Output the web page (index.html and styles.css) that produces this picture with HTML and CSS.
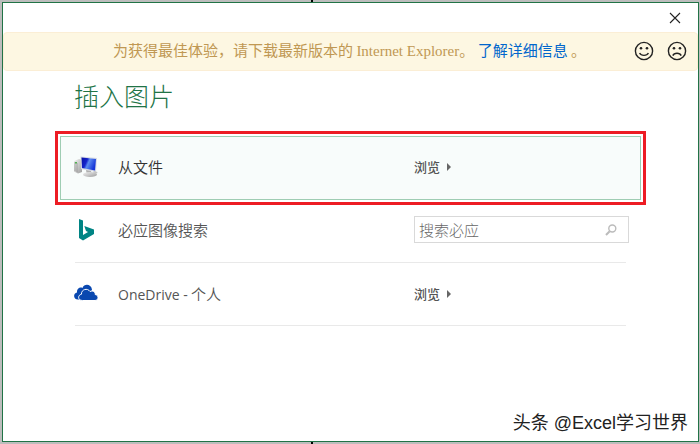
FILE: index.html
```html
<!DOCTYPE html>
<html lang="zh-CN">
<head>
<meta charset="utf-8">
<title>插入图片</title>
<link rel="stylesheet" href="styles.css">
</head>
<body>
<main class="dialog">
  <header class="titlebar">
    <button class="icon-button" type="button" aria-label="关闭">
      <svg width="12" height="12" viewBox="0 0 12 12"><path d="M1 1l10 10M11 1L1 11" fill="none" stroke="#222" stroke-width="1.1"/></svg>
    </button>
  </header>
  <div class="notice">
    <p class="notice-text">为获得最佳体验，请下载最新版本的 <span class="latin">Internet Explorer</span>。 <a href="#more">了解详细信息</a> 。</p>
    <div class="feedback">
      <button class="icon-button" type="button" aria-label="满意">
        <svg width="20" height="20" viewBox="0 0 20 20"><g fill="none" stroke="#222" stroke-width="1.4"><circle cx="10" cy="10" r="8.6"/><path d="M5.6 12c1.6 3.2 7.2 3.2 8.8 0"/></g><circle cx="7" cy="7.3" r="1.3" fill="#222"/><circle cx="13" cy="7.3" r="1.3" fill="#222"/></svg>
      </button>
      <button class="icon-button" type="button" aria-label="不满意">
        <svg width="20" height="20" viewBox="0 0 20 20"><g fill="none" stroke="#222" stroke-width="1.4"><circle cx="10" cy="10" r="8.6"/><path d="M5.8 14.6c1.4-3.2 7-3.2 8.4 0"/></g><circle cx="7" cy="7.3" r="1.3" fill="#222"/><circle cx="13" cy="7.3" r="1.3" fill="#222"/></svg>
      </button>
    </div>
  </div>
  <h1 class="title">插入图片</h1>
  <div class="highlight">
    <section class="source selected">
      <svg class="icon" width="24" height="24" viewBox="0 0 24 24">
        <defs>
          <linearGradient id="screen" x1="0" y1="0" x2="1" y2="0.4"><stop offset="0" stop-color="#0a12a0"/><stop offset=".4" stop-color="#1422cc"/><stop offset=".55" stop-color="#5c8cf0"/><stop offset="1" stop-color="#1636d8"/></linearGradient>
          <linearGradient id="metal" x1="0" y1="0" x2="1" y2="1"><stop offset="0" stop-color="#f2f2f2"/><stop offset="1" stop-color="#9c9c9c"/></linearGradient>
        </defs>
        <path d="M0 6l5-2 3 1v12l-4 1.500-4-2z" fill="url(#metal)"/>
        <path d="M1 7v9M3 8v9" stroke="#888" stroke-width=".6"/>
        <rect x="1" y="7" width="2" height="1.500" fill="#50b050"/>
        <path d="M6.500 1.500L23 3l-1 14-15-3z" fill="#d4d8e4"/>
        <path d="M7.500 2.500L22 4l-1 11.500-13-2.500z" fill="url(#screen)"/>
        <path d="M12 15l5 1 1 3-5 1z" fill="#b0b0b0"/>
        <ellipse cx="16" cy="19.500" rx="7" ry="2.500" fill="url(#metal)"/>
        <path d="M20 16l3.500 1-.5 1.500-4-1z" fill="#c4c4c4"/>
      </svg>
      <span class="label">从文件</span>
      <button class="browse" type="button">浏览<span class="arrow"></span></button>
    </section>
  </div>
  <section class="source">
    <svg class="icon" width="24" height="24" viewBox="0 0 24 24"><path d="M5 1l4 1.500v14.500l5-3-2-1L10.300 8 20 11.500v4.500L9 22.500l-4-2.500z" fill="#008484"/></svg>
    <label class="label" for="bing">必应图像搜索</label>
    <div class="search">
      <input id="bing" type="text" placeholder="搜索必应">
      <button class="icon-button" type="button" aria-label="搜索">
        <svg width="12" height="12" viewBox="0 0 12 12"><circle cx="7.300" cy="4.500" r="3.500" fill="none" stroke="#bbb" stroke-width="1.400"/><path d="M4.700 7.200L1 11" stroke="#bbb" stroke-width="2"/></svg>
      </button>
    </div>
  </section>
  <section class="source personal">
    <svg class="icon" width="24" height="24" viewBox="0 0 24 24"><path d="M4 17.500C-1 17.500-1 11 3 10.500 2.500 6.500 6 4.500 8.500 6 10 1.500 17 1.500 18 7.500L17 11 6 17.500z" fill="#0a48b0"/><path d="M8.500 18.500C3.500 18.500 3.500 13 7.500 12.200 7 7.500 13.500 5.500 16 9.500 19 8 21.500 10 21.200 12.500 25.500 13.500 24.500 18.500 21 18.500z" fill="#0a48b0" stroke="#fff" stroke-width="1"/></svg>
    <span class="label"><span class="segoe">OneDrive -</span> 个人</span>
    <button class="browse" type="button">浏览<span class="arrow"></span></button>
  </section>
  <footer class="credit">头条 @Excel学习世界</footer>
</main>
</body>
</html>
```

FILE: styles.css
```css
* {
  box-sizing: border-box;
}

body {
  display: flex;
  min-height: 100vh;
  margin: 0;
  padding: 2px 1px 2px 2px;
  background: linear-gradient(#000, #000) 311px 0 / 2px 100% no-repeat #bdbdbd;
  color: #555;
  font: 300 15px/20px "Noto Sans CJK SC", sans-serif;
}

.dialog {
  display: flex;
  flex: 1;
  flex-direction: column;
  min-width: 0;
  border: 1px solid #217346;
  background: #fff;
}

button {
  padding: 0;
  border: 0;
  background: none;
  color: inherit;
  font: inherit;
}

.icon-button {
  display: flex;
}

.titlebar {
  display: flex;
  align-items: center;
  justify-content: flex-end;
  height: 29px;
  padding: 0 17px;
}

.notice {
  display: flex;
  align-items: center;
  height: 39px;
  padding: 0 10px 2px;
  border: 1px solid #fbeed5;
  border-radius: 4px;
  background: #fdf7e2;
  color: #c09853;
}

.notice-text {
  flex: 1;
  margin: 0;
  padding-left: 99px;
  font-weight: 400;
}

.notice a {
  color: #0066cc;
  text-decoration: none;
}

.latin {
  font-family: "Liberation Serif", serif;
}

.feedback {
  display: flex;
  gap: 13px;
}

.title {
  margin: 6px 71px 18px;
  color: #217346;
  font-size: 25px;
  font-weight: 300;
  line-height: 36px;
}

.highlight {
  margin: 0 52px;
  padding: 2px;
  border: 3px solid #ed1c24;
}

.source {
  display: grid;
  grid-template-columns: 43px 296px minmax(0, 1fr);
  align-items: center;
  height: 58px;
  margin: 0 72px;
  padding-bottom: 8px;
  border-bottom: 1px solid #e9e9e9;
}

.selected {
  height: 64px;
  margin: 0;
  padding: 0 14px 2px;
  border: 1px solid #9fcdb3;
  background: #f8fcfb;
  color: #333;
}

.personal {
  height: 63px;
  padding: 0;
}

.icon {
  margin-left: -1px;
}

.label {
  font-weight: 350;
}

.segoe {
  font-family: "Open Sans", sans-serif;
  font-size: 14px;
  font-weight: 400;
}

.browse {
  display: flex;
  align-items: center;
  gap: 7px;
  color: #555;
  font-size: 13px;
  font-weight: 500;
}

.arrow {
  border: 4px solid transparent;
  border-left-color: #666;
  border-right: 0;
}

.search {
  display: flex;
  align-items: center;
  width: 215px;
  height: 27px;
  padding: 0 11px 0 4px;
  border: 1px solid #d9d9d9;
}

.search input {
  flex: 1;
  min-width: 0;
  padding: 0;
  border: 0;
  outline: 0;
  background: none;
  color: #666;
  font: inherit;
}

.search input::placeholder {
  color: #666;
}

.credit {
  margin: auto 10px 6px auto;
  color: #222;
  font: 400 18px/24px "Liberation Sans", "Noto Sans CJK SC", sans-serif;
}
```
